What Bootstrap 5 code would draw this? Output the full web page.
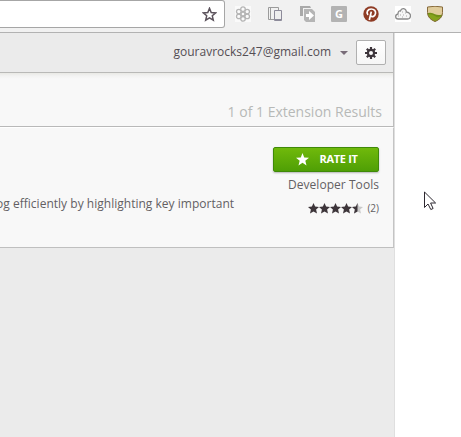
<!DOCTYPE html>
<html lang="en">
<head>
<meta charset="utf-8">
<title>Extension results</title>
<link rel="stylesheet" href="https://cdn.jsdelivr.net/npm/bootstrap@5.3.0/dist/css/bootstrap.min.css">
<style>
body{font-family:"Open Sans",sans-serif;font-size:12px;line-height:16px;background:#fff;color:#635f63;height:437px;overflow:hidden}
svg{display:block;flex:none}
.toolbar{height:33px;background:#f1f1f1;border-bottom:1px solid #b2b2b2}
.address{width:225px;height:28px;background:#fff;border:1px solid #a6a6a6;border-left:0;border-radius:0 3px 3px 0;padding-right:7px}
.tools{height:28px;gap:16px;padding-left:10px}
.store{width:395px;height:404px;background:#ebebeb;border-right:1px solid #dfdfdf}
.store-head{height:40px;border-bottom:1px solid #b9b9b7;border-right:1px solid #bdbdbd;padding-right:7px}
.account{color:#544e54;font-size:12px;padding-bottom:2px}
.caret{width:8px;height:4px;margin:0 8px 0 9px}
.gear{width:30px;height:25px;padding:0;border:1px solid #b0b0b0;border-radius:2px;background:linear-gradient(#fff,#f6f6f6)}
.results{height:54px;background:linear-gradient(#e9e9e5,#f3f3f2 3px,#f8f8f8 6px);border-bottom:1px solid #b9b9b9;border-right:1px solid #bdbdbd;padding:0 11px 4px 0;font-size:14px;line-height:20px;color:#b7b9b7}
.result{height:121px;background:#f8f8f8;border-top:1px solid #fff;border-bottom:1px solid #bfbfbf;border-right:1px solid #c4c4c4;padding:19px 14px 0 0}
.summary{padding-top:49px;margin-left:-4px;letter-spacing:.018px}
.rate{width:106px;height:25px;border:1px solid #3f8a08;border-radius:2px;background:linear-gradient(#70b90b,#4f9f05);box-shadow:0 1px 2px #0004;color:#fff;font-size:11px;font-weight:700;letter-spacing:-.3px;padding:0 0 0 2px;gap:10px}
.category{margin:5px 0 0;letter-spacing:.05px}
.rating{margin-top:7px;font-size:10px;line-height:16px}
.pointer{left:424px;top:191px}
</style>
</head>
<body>
<header class="toolbar d-flex">
  <div class="address d-flex align-items-center justify-content-end">
    <svg width="15" height="15" viewBox="0 0 15 15"><path d="M7.500 1.300 9.200 5.500l4.500.4-3.400 2.900 1 4.400-3.800-2.400-3.800 2.400 1-4.400-3.400-2.900 4.500-.4z" fill="none" stroke="#5c535c" stroke-width="1.500"/></svg>
  </div>
  <div class="tools d-flex align-items-center">
    <svg width="16" height="16" viewBox="0 0 16 16"><path fill="#fafafa" d="M0 0h16v16H0z"/><g fill="none" stroke="#b5b5b5" stroke-width="1.300"><circle cx="8" cy="8" r="2"/><circle cx="8" cy="3.200" r="2.300"/><circle cx="12.200" cy="5.600" r="2.300"/><circle cx="12.200" cy="10.400" r="2.300"/><circle cx="8" cy="12.800" r="2.300"/><circle cx="3.800" cy="10.400" r="2.300"/><circle cx="3.800" cy="5.600" r="2.300"/></g></svg>
    <svg width="16" height="16" viewBox="0 0 16 16"><g fill="none" stroke="#9b9b9b"><path d="M8 13.500H1.500v-12H11.500V4M3.500 2v11"/><path d="M7.500 4.500h7v10h-7z" fill="#eee" stroke="#8d8b9a"/><path d="M8 13.500h6" stroke="#8d8b9a"/></g></svg>
    <svg width="16" height="16" viewBox="0 0 16 16"><path fill="#a9a9a9" d="M1 0h10l1 2H4v8H1z"/><path fill="#b5b5b5" d="M5 3h8l3 3v10H7l-2-2z"/><path fill="#fff" d="M7 8h3V5l5 4.500-5 4.500V11H7z"/></svg>
    <svg width="16" height="16" viewBox="0 0 16 16"><rect width="16" height="16" rx="1" fill="#b3b3b3"/><text x="8" y="12.200" text-anchor="middle" font-family="Open Sans" font-weight="700" font-size="11" fill="#fff">G</text></svg>
    <svg width="16" height="16" viewBox="0 0 16 16"><circle cx="8" cy="8" r="7.700" fill="#8e3b24"/><path d="M5 8.900C2.800 6.300 4.700 3 8.200 3c3.200 0 4.700 2.100 4.300 4.400-.5 3.100-3.400 4-4.700 2.300M8.300 5.600 6.300 14" fill="none" stroke="#fff" stroke-width="1.700"/></svg>
    <svg width="16" height="16" viewBox="0 0 16 16"><path fill="#fff" d="M0 0h16v16H0z"/><path d="M3.300 13C-.2 13-.1 8.500 3 8c0-2.600 1.100-3.300 2.400-3C6.500 1.300 11 1.900 11.400 6c3.600.3 5 3.500 3.500 5.800-.5.8-1.200 1.200-2.400 1.200z" fill="#f6f6f6" stroke="#8a8a8a" stroke-width="1.300"/><path d="M7 6h1M10 7h1M5 9h1M8 9h1M11 10h1M7 11h1M3 10h1" stroke="#aaa"/></svg>
    <svg width="16" height="16" viewBox="0 0 16 16"><path d="M.5 1Q8-.5 15.500 1v5.500C15.500 11 12 14 8 15.500 4 14 .5 11 .5 6.500z" fill="#e0cc9b"/><path d="M.5 7Q5 6 8 8.200q3 1.500 7.500.3C15 11.500 12 14 8 15.500 4 14 1 11 .5 7z" fill="#718f16"/><path d="M1 8.500Q5 7.500 8 10t6 0C13 12.500 11 14.400 8 15.500 4 14 1.500 11.500 1 8.500z" fill="#86a31d"/><path d="M.5 1Q8-.5 15.500 1v5.500C15.500 11 12 14 8 15.500 4 14 .5 11 .5 6.500z" fill="none" stroke="#876b3c"/></svg>
  </div>
</header>
<main class="store">
  <div class="store-head d-flex align-items-center justify-content-end">
    <span class="account">gouravrocks247@gmail.com</span>
    <svg class="caret" viewBox="0 0 8 4"><path d="M0 0h8L4 4z" fill="#786c78"/></svg>
    <button class="gear btn d-flex align-items-center justify-content-center" aria-label="Settings">
      <svg width="12" height="12" viewBox="0 0 12 12"><circle cx="6" cy="6" r="3.100" fill="none" stroke="#3d353b" stroke-width="2.200"/><path d="M6 0v2.500M6 9.500V12M0 6h2.500M9.500 6H12M1.800 1.800l1.700 1.700M8.500 8.500l1.700 1.700M1.800 10.200l1.700-1.700M8.500 3.500l1.700-1.700" stroke="#3d353b" stroke-width="2.200"/></svg>
    </button>
  </div>
  <div class="results d-flex align-items-end justify-content-end"><span class="count">1 of 1 Extension Results</span></div>
  <article class="result d-flex justify-content-between">
    <div class="summary text-nowrap">og efficiently by highlighting key important</div>
    <div class="d-flex flex-column align-items-end">
      <button class="rate btn d-flex align-items-center justify-content-center">
        <svg width="13" height="13" viewBox="0 0 12 12"><path fill="#fff" d="m6 0 1.600 4.200 4.400.2-3.400 2.800L9.700 11.600 6 9.100l-3.700 2.500 1.100-4.400L0 4.400l4.400-.2z"/></svg>
        <span>RATE IT</span>
      </button>
      <div class="category">Developer Tools</div>
      <div class="rating d-flex align-items-center gap-1">
        <svg width="55" height="11" viewBox="0 0 55 11"><defs><path id="s" d="m5.500 0 1.600 3.600 3.900.3-2.900 2.600.9 4-3.500-2.100L2 10.500l.9-4L0 3.900l3.900-.3z"/><clipPath id="h"><path d="M0 0h5.500v11H0z"/></clipPath></defs><g fill="#3d353a"><use href="#s"/><use href="#s" x="11"/><use href="#s" x="22"/><use href="#s" x="33"/></g><use href="#s" x="44" fill="#c9c9c9"/><g transform="translate(44)"><use href="#s" clip-path="url(#h)" fill="#3d353a"/></g></svg>
        <span>(2)</span>
      </div>
    </div>
  </article>
</main>
<svg class="pointer position-absolute" width="13" height="20" viewBox="0 0 13 20"><path d="M.5 1v15.500L4 13l2.800 5.500 2.300-1L6.600 12h5z" fill="#fff" stroke="#2d2830"/></svg>
<script src="https://cdn.jsdelivr.net/npm/bootstrap@5.3.0/dist/js/bootstrap.bundle.min.js"></script>
</body>
</html>
